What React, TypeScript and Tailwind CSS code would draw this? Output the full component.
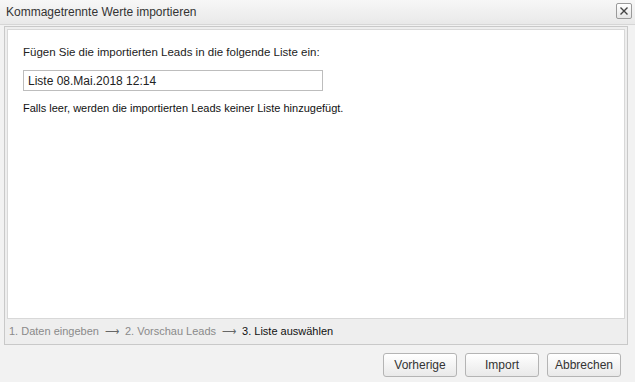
import React from "react";

const font = { fontFamily: '"Liberation Sans", Arial, sans-serif' };

export default function App() {
  return (
    <div
      className="w-[635px] h-[382px] bg-[#f2f2f2] flex flex-col text-[12px] text-[#222]"
      style={font}
    >
      <div className="h-[25px] flex items-center justify-between pl-[6px] pr-[3px] bg-gradient-to-b from-[#f7f7f7] to-[#e9e9e9] border-b border-[#d6d6d6]">
        <span className="text-[12px] text-[#333] mt-[-1px]">Kommagetrennte Werte importieren</span>
        <div className="w-[16px] h-[16px] mt-[-2px] border border-[#9a9a9a] rounded-[2px] bg-gradient-to-b from-white to-[#e6e6e6] flex items-center justify-center">
          <svg width="10" height="10" viewBox="0 0 10 10">
            <path d="M1.5 1.5 L8.5 8.5 M8.5 1.5 L1.5 8.5" stroke="#444" strokeWidth="1.4" />
          </svg>
        </div>
      </div>
      <div className="ml-[4px] mr-[7px] mt-[1px] h-[319px] border border-[#c9c9c9] bg-[#eeeeee] flex flex-col">
        <div className="flex-1 m-[2px] mb-0 bg-white border border-[#d8d8d8] pl-[15px] pt-[14px]">
          <div className="text-[11.5px] text-[#222]">Fügen Sie die importierten Leads in die folgende Liste ein:</div>
          <div className="mt-[9px] w-[300px] h-[21px] border border-[#bdbdbd] flex items-center pl-[4px] text-[12px] text-[#222]">
            Liste 08.Mai.2018 12:14
          </div>
          <div className="mt-[9px] text-[11px] text-[#111]">
            Falls leer, werden die importierten Leads keiner Liste hinzugefügt.
          </div>
        </div>
        <div className="h-[25px] flex items-center pl-[4px] text-[11px] text-[#8a8a8a] gap-[6px]">
          <span>1. Daten eingeben</span>
          <span className="text-[#666] text-[10px]">⟶</span>
          <span>2. Vorschau Leads</span>
          <span className="text-[#666] text-[10px]">⟶</span>
          <span className="text-[#111]">3. Liste auswählen</span>
        </div>
      </div>
      <div className="flex justify-end gap-[8px] pr-[14px] mt-[8px]">
        {["Vorherige", "Import", "Abbrechen"].map((t) => (
          <div
            key={t}
            className="w-[74px] h-[24px] border border-[#b4b4b4] rounded-[3px] bg-gradient-to-b from-white to-[#e9e9e9] flex items-center justify-center text-[12px] text-[#333]"
          >
            {t}
          </div>
        ))}
      </div>
    </div>
  );
}
